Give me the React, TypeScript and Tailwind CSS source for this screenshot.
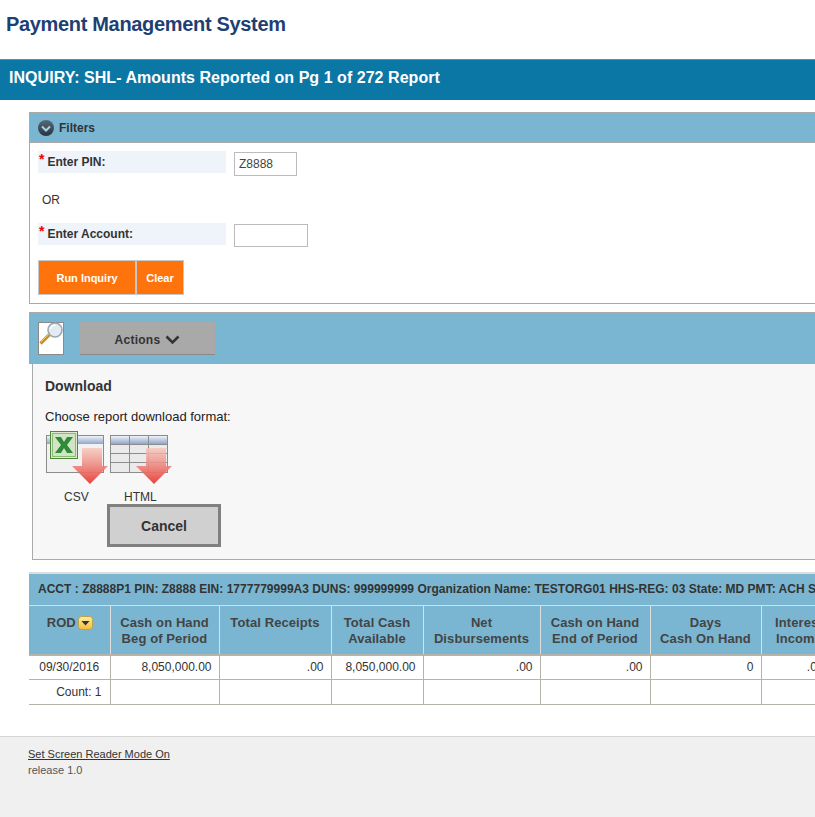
import React from "react";

function ChevronBadge() {
  return (
    <svg width="16" height="16" viewBox="0 0 16 16" className="block">
      <defs>
        <linearGradient id="cb" x1="0" y1="0" x2="0" y2="1">
          <stop offset="0" stopColor="#5a6a78" />
          <stop offset="1" stopColor="#26343f" />
        </linearGradient>
      </defs>
      <circle cx="8" cy="8" r="8" fill="url(#cb)" />
      <path d="M4 6.5 L8 10.5 L12 6.5" fill="none" stroke="#a9d3e2" strokeWidth="2" />
    </svg>
  );
}

function Magnifier() {
  return (
    <svg width="26" height="33" viewBox="0 0 26 33" className="block">
      <rect x="0.5" y="0.5" width="25" height="32" fill="#fff" stroke="#8a8a8a" />
      <path d="M2.5 21.5 L12 12" stroke="#c98a2a" strokeWidth="3.2" />
      <path d="M3 20 L11 12" stroke="#f0c860" strokeWidth="1" />
      <circle cx="17" cy="8" r="7" fill="#e3ecf2" stroke="#9aa7b0" strokeWidth="1.6" />
      <path d="M12.5 7 A4.8 4.8 0 0 1 17.5 3.2" fill="none" stroke="#fff" strokeWidth="1.5" />
    </svg>
  );
}

const arrowPath = "M36 17 H56 V35 H62 L44 53 L26 35 H36 Z";

function ExcelIcon() {
  return (
    <svg width="62" height="54" viewBox="0 0 62 54" className="block">
      <defs>
        <linearGradient id="a1" x1="0" y1="0" x2="0" y2="1">
          <stop offset="0" stopColor="#f6c6bc" stopOpacity="0.8" />
          <stop offset="1" stopColor="#e6433c" />
        </linearGradient>
        <linearGradient id="h1" x1="0" y1="0" x2="0" y2="1">
          <stop offset="0" stopColor="#eef2f8" />
          <stop offset="1" stopColor="#8fa6c8" />
        </linearGradient>
      </defs>
      <rect x="0.5" y="4.5" width="57" height="37" fill="#f1f1f1" stroke="#8c8c8c" />
      <rect x="1" y="5" width="56" height="8" fill="url(#h1)" />
      <rect x="4.5" y="0.5" width="27" height="27" fill="#dcebd0" stroke="#4f8a3c" />
      <rect x="6.5" y="2.5" width="23" height="23" fill="#d2e4c4" stroke="#8dba77" />
      <path d="M9 6 H15 L18 11 L21 6 H27 L21 14 L27 22 H21 L18 17 L15 22 H9 L15 14 Z" fill="#2f8a3a" />
      <path d={arrowPath} fill="url(#a1)" />
    </svg>
  );
}

function TableIcon() {
  const cols = [19, 38];
  const rows = [13, 22, 31];
  return (
    <svg width="62" height="54" viewBox="0 0 62 54" className="block">
      <defs>
        <linearGradient id="a2" x1="0" y1="0" x2="0" y2="1">
          <stop offset="0" stopColor="#f6c6bc" stopOpacity="0.8" />
          <stop offset="1" stopColor="#e6433c" />
        </linearGradient>
        <linearGradient id="h2" x1="0" y1="0" x2="0" y2="1">
          <stop offset="0" stopColor="#eef2f8" />
          <stop offset="1" stopColor="#8fa6c8" />
        </linearGradient>
      </defs>
      <rect x="0.5" y="4.5" width="57" height="37" fill="#eaeaea" stroke="#8c8c8c" />
      <rect x="1" y="5" width="56" height="8" fill="url(#h2)" />
      {cols.map((x) => (
        <path key={x} d={`M${x + 0.5} 5 V41`} stroke="#8c8c8c" />
      ))}
      {rows.map((y) => (
        <path key={y} d={`M1 ${y + 0.5} H57`} stroke="#8c8c8c" />
      ))}
      <path d={arrowPath} fill="url(#a2)" />
    </svg>
  );
}

const cols = [81, 109, 112, 92, 117, 110, 111, 76];

const heads: string[][] = [
  ["ROD"],
  ["Cash on Hand", "Beg of Period"],
  ["Total Receipts"],
  ["Total Cash", "Available"],
  ["Net", "Disbursements"],
  ["Cash on Hand", "End of Period"],
  ["Days", "Cash On Hand"],
  ["Interest", "Income"],
];

const row = ["09/30/2016", "8,050,000.00", ".00", "8,050,000.00", ".00", ".00", "0", ".00"];

function valueAlign(i: number) {
  if (i === 0) return "text-center";
  if (i === 7) return "text-right pr-[13px]";
  return "text-right pr-[7px]";
}

export default function App() {
  return (
    <div className="w-[815px] h-[817px] overflow-hidden bg-white text-[#333] font-['Liberation_Sans',Arial,sans-serif]">
      <div className="h-[59px] pl-[6px] pt-[11px] text-[20px] leading-[26px] font-bold tracking-[-0.33px] text-[#1f3f73] whitespace-nowrap">
        Payment Management System
      </div>
      <div className="h-[41px] bg-[#0a77a5] border-t border-[#5b8fb0] pl-[9px] pt-[8px] text-[16px] leading-[20px] font-bold tracking-[0.04px] text-white whitespace-nowrap">
        INQUIRY: SHL- Amounts Reported on Pg 1 of 272 Report
      </div>

      <div className="ml-[29px] w-[830px] mt-[12px]">
        <div className="h-[192px] border border-[#aaaaaa]">
          <div className="h-[30px] bg-[#7ab6d1] border-b border-[#aaaaaa] flex items-center pl-[8px] gap-[5px]">
            <ChevronBadge />
            <span className="text-[12px] font-bold text-[#333]">Filters</span>
          </div>
          <div className="pl-[8px] pt-[8px]">
            <div className="flex items-start h-[24px]">
              <div className="w-[188px] h-[22px] bg-[#eff3fa] pl-px flex items-start">
                <span className="text-[#e00] text-[14px] leading-[16px] font-bold">*</span>
                <span className="ml-[3px] text-[12px] leading-[22px] font-bold text-[#333]">Enter PIN:</span>
              </div>
              <div className="ml-[8px] mt-px w-[63px] h-[24px] border border-[#bbbbbb] text-[12px] leading-[22px] pl-[4px] text-[#444]">
                Z8888
              </div>
            </div>
            <div className="h-[48px] pl-[4px] pt-[17px] text-[12px] leading-[16px] text-[#333]">OR</div>
            <div className="flex items-start h-[24px]">
              <div className="w-[188px] h-[22px] bg-[#eff3fa] pl-px flex items-start">
                <span className="text-[#e00] text-[14px] leading-[16px] font-bold">*</span>
                <span className="ml-[3px] text-[12px] leading-[22px] font-bold text-[#333]">Enter Account:</span>
              </div>
              <div className="ml-[8px] mt-px w-[74px] h-[23px] border border-[#bbbbbb]" />
            </div>
            <div className="flex mt-[13px]">
              <div className="w-[98px] h-[35px] bg-[#ff730d] border border-[#c8c8c8] flex items-center justify-center pt-[2px] text-[11px] font-bold text-white">
                Run Inquiry
              </div>
              <div className="w-[48px] h-[35px] bg-[#ff730d] border border-[#c8c8c8] flex items-center justify-center pt-[2px] text-[11px] font-bold text-white">
                Clear
              </div>
            </div>
          </div>
        </div>

        <div className="mt-[8px] h-[52px] bg-[#7ab6d1] border-t border-[#aaaaaa] flex items-start pl-[9px] pt-[9px]">
          <Magnifier />
          <div className="ml-[16px] w-[135px] h-[33px] bg-[#a9a9a9] border-b border-[#8a8a8a] flex items-center justify-center gap-[5px] pt-[4px] text-[12px] font-bold tracking-[0.25px] text-[#333]">
            Actions
            <svg width="15" height="10" viewBox="0 0 15 10">
              <path d="M1.5 1.5 L7.5 7.5 L13.5 1.5" fill="none" stroke="#333" strokeWidth="2.6" />
            </svg>
          </div>
        </div>
        <div className="ml-[3px] h-[196px] bg-[#f7f7f7] border-l border-b border-[#aaaaaa] pl-[12px] pt-[14px]">
          <div className="text-[14px] leading-[16px] font-bold text-[#333]">Download</div>
          <div className="mt-[15px] text-[13px] leading-[16px] text-[#222]">Choose report download format:</div>
          <div className="flex mt-[6px] ml-px h-[54px]">
            <ExcelIcon />
            <div className="ml-[2px]">
              <TableIcon />
            </div>
          </div>
          <div className="flex mt-[5px] text-[12px] leading-[14px] text-[#333] h-[14px]">
            <span className="ml-[19px] w-[60px]">CSV</span>
            <span>HTML</span>
          </div>
          <div className="ml-[62px] w-[114px] h-[43px] bg-[#d0d0d0] border-[3px] border-[#808080] flex items-center justify-center pt-px text-[14px] font-bold text-[#333]">
            Cancel
          </div>
        </div>

        <div className="mt-[12px] h-[33px] bg-[#7ab6d1] border-t-2 border-[#dddddd] pl-[9px] pt-[7px] text-[12px] leading-[16px] font-bold tracking-[0.02px] text-[#333] whitespace-nowrap overflow-hidden">
          ACCT : Z8888P1 PIN: Z8888 EIN: 1777779999A3 DUNS: 999999999 Organization Name: TESTORG01 HHS-REG: 03 State: MD PMT: ACH Status: Active
        </div>
        <table className="table-fixed border-collapse w-[808px] text-[12px]">
          <colgroup>
            {cols.map((w, i) => (
              <col key={i} style={{ width: w }} />
            ))}
          </colgroup>
          <thead>
            <tr className="h-[49px]">
              {heads.map((h, i) => (
                <th
                  key={i}
                  className="bg-[#7ab6d1] border-t border-r border-b-2 border-t-[#dddddd] border-r-[#dddddd] border-b-[#b5b3aa] align-top pt-[9px] font-bold text-[13px] leading-[16px] tracking-[0.1px] text-[#444]"
                >
                  {i === 0 ? (
                    <div className="flex items-center justify-center gap-[2px] pl-px">
                      ROD
                      <svg width="15" height="14" viewBox="0 0 15 14">
                        <defs>
                          <linearGradient id="yb" x1="0" y1="0" x2="0" y2="1">
                            <stop offset="0" stopColor="#ffeea0" />
                            <stop offset="1" stopColor="#f5bd3a" />
                          </linearGradient>
                        </defs>
                        <rect x="0.5" y="0.5" width="14" height="13" rx="3" fill="url(#yb)" stroke="#b8a24a" />
                        <path d="M3.5 5 H11.5 L7.5 9.5 Z" fill="#333" />
                      </svg>
                    </div>
                  ) : (
                    h.map((l) => <div key={l} className="whitespace-nowrap">{l}</div>)
                  )}
                </th>
              ))}
            </tr>
          </thead>
          <tbody className="text-[#333]">
            <tr className="h-[25px]">
              {row.map((v, i) => (
                <td key={i} className={`border-r border-b border-[#b5b3aa] whitespace-nowrap ${valueAlign(i)}`}>
                  {v}
                </td>
              ))}
            </tr>
            <tr className="h-[25px]">
              {row.map((_, i) => (
                <td
                  key={i}
                  className={`border-r border-b border-[#b5b3aa] ${i === 0 ? "text-right pr-[8px]" : ""}`}
                >
                  {i === 0 ? "Count: 1" : ""}
                </td>
              ))}
            </tr>
          </tbody>
        </table>
      </div>

      <div className="mt-[31px] h-[90px] bg-[#f0f0f0] border-t border-[#d4d4d4] pl-[28px] pt-[10px]">
        <div className="text-[11px] leading-[14px] text-[#333] underline">Set Screen Reader Mode On</div>
        <div className="text-[11px] leading-[18px] text-[#555]">release 1.0</div>
      </div>
    </div>
  );
}
